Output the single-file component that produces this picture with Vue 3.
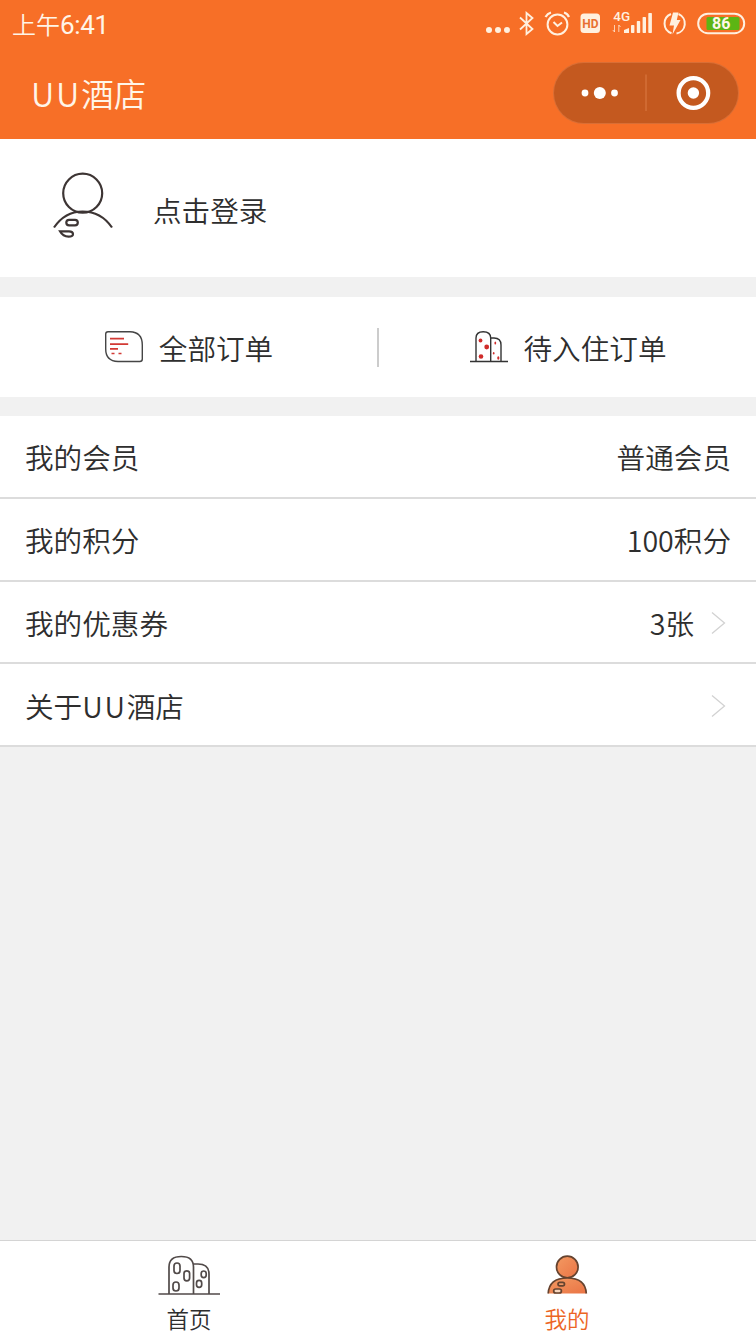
<template>
  <div class="page">
    <header class="header">
      <div class="status-bar">
        <span class="status-time">上午<span class="clock">6:41</span></span>
        <svg class="status-icons" width="264" height="32" viewBox="484 8 264 32" fill="none" stroke="#fff0df">
          <g fill="#fff0df" stroke="none">
            <circle cx="489" cy="30" r="3" />
            <circle cx="498" cy="30" r="3" />
            <circle cx="507" cy="30" r="3" />
          </g>
          <path d="M520 17.5 L532.5 29 L526.5 34 V13 L532.5 18 L520 29.5" stroke-width="1.8" />
          <circle cx="557.5" cy="24.5" r="9.9" stroke-width="2" />
          <path d="M553.5 22 L557.5 26 L562 22.5" stroke-width="2" />
          <path d="M545.5 17 Q547.5 13.5 551 12.5 M564 12.5 Q567.5 13.5 569 17" stroke-width="2.2" />
          <rect x="580.5" y="13.5" width="19.5" height="19.5" rx="3.5" fill="#fff0df" stroke="none" />
          <text class="hd" x="590.3" y="28" text-anchor="middle">HD</text>
          <text class="net" x="613.3" y="21.3">4G</text>
          <path d="M614.5 25 V32 L612.8 30 M618.8 32 V25 L620.5 27" stroke-width="1" opacity=".75" />
          <g fill="#fff0df" stroke="none">
            <path d="M624 33 V30 L629 28 V33 Z" />
            <rect x="631" y="25" width="3.4" height="8" rx=".7" />
            <rect x="636.8" y="21" width="3.4" height="12" rx=".7" />
            <rect x="642.6" y="17" width="3.4" height="16" rx=".7" />
            <rect x="648.3" y="13" width="3.6" height="20" rx=".7" />
          </g>
          <path d="M671 14 A10.3 10.3 0 0 0 671.5 33.3 M678.5 14 A10.3 10.3 0 0 1 676.5 33.6" stroke-width="2" />
          <path d="M673 12.5 H678.5 L676.8 20 H680.5 L672.5 34.5 L674 25.5 H669.5 Z" fill="#fff0df" stroke="none" />
          <rect x="698.2" y="13.7" width="46" height="19.5" rx="9.7" stroke-width="2" />
          <rect x="706.5" y="17" width="33" height="13" rx="1.5" fill="#5cb514" stroke="none" />
          <text class="battery" x="721.3" y="29.2" text-anchor="middle">86</text>
        </svg>
      </div>
      <div class="title-bar">
        <h1><span class="brand">UU</span>酒店</h1>
        <div class="capsule">
          <svg width="184" height="60" viewBox="0 0 184 60">
            <g fill="#fff">
              <circle cx="31" cy="30" r="3.4" />
              <circle cx="45.8" cy="30" r="6" />
              <circle cx="60.5" cy="30" r="3.4" />
              <circle cx="139.4" cy="30" r="5.7" />
            </g>
            <path d="M92 11.5 V48" stroke="#d9763f" stroke-width="1.2" />
            <circle cx="139.4" cy="30" r="14.8" fill="none" stroke="#fff" stroke-width="4.2" />
          </svg>
        </div>
      </div>
    </header>

    <section class="login">
      <svg width="64" height="70" viewBox="51 171 64 70" fill="none" stroke="#3d3534" stroke-width="2.2">
        <circle cx="82.7" cy="193.2" r="19.5" />
        <path d="M54 227.5 Q65 211.5 82.5 211.5 Q101 211.5 112 227.5" />
        <rect x="66.3" y="219.8" width="11.5" height="5.6" rx="2.8" />
        <path d="M60 231.3 H69 Q73 231.3 73 234 Q73 236.7 68.5 236.7 Q63 236.7 60 231.3 Z" />
      </svg>
      <span>点击登录</span>
    </section>

    <section class="orders">
      <div class="order">
        <svg width="40" height="34" viewBox="103 330 40 34" fill="none">
          <path d="M107 331.7 H129 Q141.3 332 141.3 345 V359 Q141.3 361.5 138.8 361.5 H117 Q104.7 361 104.7 349 V334 Q104.7 331.7 107 331.7 Z" stroke="#454545" stroke-width="1.4" />
          <path d="M109 338.6 H123 M109 344.2 H127.2 M109 348.8 H117 M110.5 353.5 H113.5 M117.5 353.5 H120.5" stroke="#d23a35" stroke-width="1.7" />
        </svg>
        <span>全部订单</span>
      </div>
      <i class="divider"></i>
      <div class="order">
        <svg width="40" height="34" viewBox="469 330 40 34" fill="none">
          <path d="M470 361.5 H508 M476 361.5 V338 Q476 331.7 483.2 331.7 Q490.7 331.7 490.7 338 V361.5 M490.7 338 H494 Q501 338 501 345 V361.5" stroke="#333" stroke-width="1.4" />
          <g fill="#d02c2a">
            <circle cx="480.5" cy="340.5" r="1.9" />
            <circle cx="486.7" cy="347" r="2.4" />
            <circle cx="481" cy="356.5" r="2.3" />
            <ellipse cx="495.3" cy="343" rx=".9" ry="1.5" />
            <ellipse cx="493.7" cy="353.2" rx=".8" ry="1.3" />
            <ellipse cx="498.3" cy="358" rx="1.1" ry="1.7" />
          </g>
        </svg>
        <span>待入住订单</span>
      </div>
    </section>

    <ul class="list">
      <li v-for="item in items" :key="item.label">
        <span>{{ item.label }}<template v-if="item.brand"><span class="brand">{{ item.brand }}</span>酒店</template></span>
        <span class="value">{{ item.value }}</span>
        <svg v-if="item.arrow" class="arrow" width="15" height="24" viewBox="0 0 15 24">
          <path d="M1 1.5 L13.5 12 L1 22.5" fill="none" stroke="#d2d2d2" stroke-width="1.3" />
        </svg>
      </li>
    </ul>

    <nav class="tab-bar">
      <a class="tab">
        <svg width="64" height="42" viewBox="157 1254 64 42" fill="none" stroke="#514a49" stroke-width="1.7">
          <path d="M158.5 1294 H220 M169 1294 V1267 Q169 1256.5 181.3 1256.5 Q193.5 1256.5 193.5 1267 V1294 M193.5 1264 H198 Q209 1264 209 1274 V1294" />
          <rect x="174" y="1263" width="6" height="10.5" rx="3" />
          <rect x="184" y="1270.8" width="5.6" height="10" rx="2.8" />
          <rect x="173" y="1282" width="6" height="9" rx="3" />
          <rect x="201.2" y="1271" width="5" height="6.6" rx="2.5" />
          <rect x="196.5" y="1280.3" width="5.2" height="7" rx="2.6" />
        </svg>
        <span>首页</span>
      </a>
      <a class="tab active">
        <svg width="64" height="42" viewBox="535 1254 64 42" stroke="#65432f" stroke-width="1.7">
          <defs>
            <linearGradient id="skin" x1="0" y1="0" x2="1" y2="1">
              <stop offset="0" stop-color="#f39a62" />
              <stop offset="1" stop-color="#ea7445" />
            </linearGradient>
          </defs>
          <circle cx="567.3" cy="1267" r="10.8" fill="url(#skin)" />
          <path d="M548.2 1293.5 Q549 1278 567.3 1278 Q585.5 1278 586.3 1293.5" fill="url(#skin)" />
          <rect x="558" y="1282.3" width="6.5" height="3.6" rx="1.8" fill="#ee9664" />
          <rect x="553.7" y="1289" width="7.7" height="4" rx="2" fill="#f6d5bd" />
        </svg>
        <span>我的</span>
      </a>
    </nav>
  </div>
</template>

<script setup>
import { ref } from 'vue';

const items = ref([
  { label: '我的会员', value: '普通会员', arrow: false },
  { label: '我的积分', value: '100积分', arrow: false },
  { label: '我的优惠券', value: '3张', arrow: true },
  { label: '关于', brand: 'UU', value: '', arrow: true }
]);
</script>

<style>
body { margin: 0; background: #f1f1f1; }
</style>

<style scoped>
.page {
  display: flex; flex-direction: column; width: 756px; height: 1344px; overflow: hidden;
  background: #f1f1f1; color: #2e2e2e; font-size: 28.6px; font-weight: 350; line-height: 40px;
  font-family: 'Noto Sans CJK SC', sans-serif;
}
svg { display: block; flex: none; }
.header { height: 139px; flex: none; background: #f76f27; color: #fff5e8; }
.status-bar { display: flex; justify-content: space-between; height: 48px; padding: 0 8px 0 12px; box-sizing: border-box; }
.status-time { font-size: 24px; line-height: 48px; font-weight: 350; }
.clock { font-family: Roboto, sans-serif; font-size: 26px; font-weight: 400; letter-spacing: -.3px; }
.status-icons { margin-top: 8px; }
.hd { font: 700 12px Roboto, sans-serif; fill: #e87031; stroke: none; }
.net { font: 500 13.5px Roboto, sans-serif; fill: #fff0df; stroke: none; }
.battery { font: 700 16px Roboto, sans-serif; fill: #fff8e8; stroke: none; }
.title-bar { display: flex; justify-content: space-between; align-items: center; height: 89px; padding: 0 18px 0 31px; }
h1 { margin: 0; font-size: 32.5px; font-weight: 350; }
.brand { letter-spacing: 1.8px; }
.capsule { width: 184px; height: 60px; border-radius: 31px; background: #c4591f; box-shadow: 0 0 0 1px #d96e35; }
.login { display: flex; height: 138px; flex: none; padding-left: 51px; background: #fff; }
.login svg { margin-top: 32px; }
.login span { margin: 51px 0 0 38px; }
.orders { display: flex; align-items: center; height: 100px; flex: none; margin: 20px 0 19px; background: #fff; }
.order { display: flex; flex: 1; align-items: center; justify-content: center; gap: 15px; }
.order span { padding-top: 2px; }
.divider { width: 2px; height: 39px; background: #ccc; }
.list { margin: 0; padding: 0; list-style: none; }
.list li {
  display: flex; align-items: center; height: 82.75px; box-sizing: border-box; padding: 2px 25px 0;
  background: #fff; border-bottom: 2px solid #dcdcdc;
}
.value { margin-left: auto; }
.arrow { margin: 0 5px 0 17px; }
.tab-bar { display: flex; height: 104px; box-sizing: border-box; margin-top: auto; background: #fff; border-top: 1px solid #d4d4d4; }
.tab { display: flex; flex: 1; flex-direction: column; align-items: center; padding-top: 13px; font-size: 22.5px; line-height: 32px; }
.tab span { margin-top: 6px; }
.active { color: #ec6524; }
</style>
